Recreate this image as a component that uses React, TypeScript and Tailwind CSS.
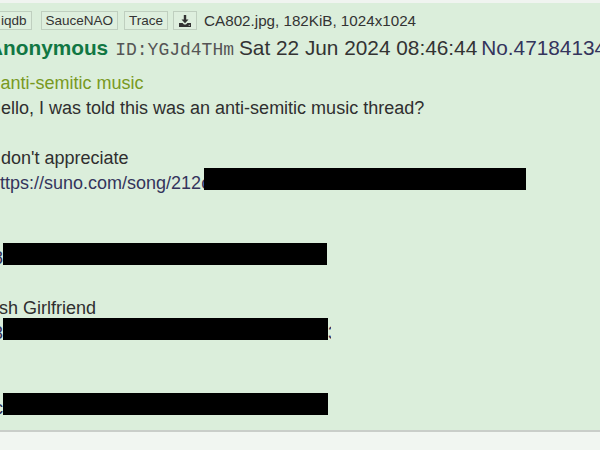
const sans = "font-['Liberation_Sans',Arial,Helvetica,sans-serif]";

function FileButton({ children, className = "" }: { children: React.ReactNode; className?: string }) {
  return (
    <span
      className={`flex h-[19px] items-center border border-[#bfcfbf] bg-[#deefde] px-[4px] text-[13.5px] leading-none text-[#333] ${className}`}
    >
      {children}
    </span>
  );
}

function DownloadIcon() {
  return (
    <svg viewBox="0 0 12 12" width="12" height="12" fill="#333">
      <path d="M4.8 0h2.4v4.6h2.3L6 8.2 2.5 4.6h2.3z" />
      <path d="M0 8h3.6l1.4 1.4h2L8.4 8H12v4H0z" />
      <circle cx="10.2" cy="10.3" r="0.6" fill="#deefde" />
    </svg>
  );
}

// right-edge sliver of a link glyph peeking out from under a redaction bar
function Sliver({ ch }: { ch: string }) {
  return (
    <span className="flex h-[25px] w-[3px] shrink-0 justify-end overflow-hidden text-[#34345c]">
      <span className="shrink-0">{ch}</span>
    </span>
  );
}

function Bar({ w }: { w: string }) {
  return <span className={`mt-[-3px] h-[22px] shrink-0 bg-black ${w}`} />;
}

export default function App() {
  return (
    <div className={`h-[450px] w-[600px] overflow-hidden bg-[#f1f6f1] ${sans}`}>
      <div className="h-[3px] bg-[#f0f4f0]" />
      <div className="h-[429px] overflow-hidden border-b-2 border-[#c9cec9] bg-[#dbeedb]">
        {/* file info row */}
        <div className="ml-[-4px] mt-[8px] flex items-center whitespace-nowrap">
          <FileButton>iqdb</FileButton>
          <FileButton className="ml-[9px]">SauceNAO</FileButton>
          <FileButton className="ml-[6px]">Trace</FileButton>
          <FileButton className="ml-[5px] w-[24px] justify-center px-0">
            <DownloadIcon />
          </FileButton>
          <span className="ml-[7px] text-[15.2px] leading-none text-[#333]">
            CA802.jpg, 182KiB, 1024x1024
          </span>
        </div>

        {/* post header */}
        <div className="ml-[-12px] mt-[6px] flex h-[24px] items-baseline whitespace-nowrap text-[20.8px] leading-[24px]">
          <span className="font-bold text-[#117743]">Anonymous</span>
          <span className="ml-[7px] font-['Liberation_Mono',monospace] text-[18px] text-[#555]">
            ID:YGJd4THm
          </span>
          <span className="ml-[5px] text-[#333]">Sat 22 Jun 2024 08:46:44</span>
          <span className="ml-[4px] text-[#34345c]">No.47184134</span>
        </div>

        {/* post body */}
        <div className="mt-[11px] whitespace-nowrap text-[18px] leading-[25px] text-[#2f2f2f]">
          <div className="ml-[-10px] h-[25px] text-[#789922]">&gt;anti-semitic music</div>
          <div className="ml-[-12px] h-[25px]">Hello, I was told this was an anti-semitic music thread?</div>
          <div className="h-[25px]" />
          <div className="ml-[-9px] h-[25px]">I don't appreciate</div>
          <div className="ml-[-10px] flex h-[25px]">
            <span className="text-[#34345c]">https://suno.com/song/212</span>
            <span className="w-[3px] shrink-0 overflow-hidden text-[#34345c]">c</span>
            <Bar w="w-[322px]" />
          </div>
          <div className="h-[25px]" />
          <div className="h-[25px]" />
          <div className="flex h-[25px]">
            <Sliver ch="8" />
            <Bar w="w-[324px]" />
          </div>
          <div className="h-[25px]" />
          <div className="ml-[-1px] h-[25px]">sh Girlfriend</div>
          <div className="flex h-[25px]">
            <Sliver ch="3" />
            <Bar w="w-[325px]" />
            <span className="w-[3px] shrink-0 overflow-hidden text-[#34345c]">3</span>
          </div>
          <div className="h-[25px]" />
          <div className="h-[25px]" />
          <div className="flex h-[25px]">
            <Sliver ch="c" />
            <Bar w="w-[325px]" />
          </div>
        </div>
      </div>
    </div>
  );
}
